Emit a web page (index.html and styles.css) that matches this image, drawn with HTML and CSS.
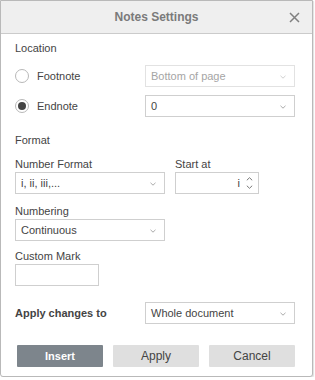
FILE: index.html
```html
<!DOCTYPE html>
<html lang="en">
<head>
  <meta charset="UTF-8">
  <title>Notes Settings</title>
  <link rel="stylesheet" href="styles.css">
</head>
<body>

<div class="dialog">
  <div class="dialog-header">
    <span class="dialog-title">Notes Settings</span>
    <svg class="close-icon" width="11" height="11" viewBox="0 0 11 11">
      <path d="M1 1 L10 10 M10 1 L1 10" stroke="#808080" stroke-width="1.5" fill="none"/>
    </svg>
  </div>

  <div class="dialog-body">
    <div class="section-title first">Location</div>

    <div class="loc-row">
      <label class="radio"><span class="radio-circle"></span>Footnote</label>
      <div class="select disabled">Bottom of page
        <svg class="chev" width="6" height="4" viewBox="0 0 6 4"><path d="M0.5 0.8 L3 3.2 L5.5 0.8" stroke="#d0d0d0" fill="none"/></svg>
      </div>
    </div>
    <div class="loc-row second">
      <label class="radio"><span class="radio-circle checked"></span>Endnote</label>
      <div class="select">0
        <svg class="chev" width="6" height="4" viewBox="0 0 6 4"><path d="M0.5 0.8 L3 3.2 L5.5 0.8" stroke="#aaa" fill="none"/></svg>
      </div>
    </div>

    <div class="section-title format">Format</div>

    <div class="format-row">
      <div class="field">
        <div class="field-label">Number Format</div>
        <div class="select">i, ii, iii,...
          <svg class="chev" width="6" height="4" viewBox="0 0 6 4"><path d="M0.5 0.8 L3 3.2 L5.5 0.8" stroke="#aaa" fill="none"/></svg>
        </div>
      </div>
      <div class="field">
        <div class="field-label">Start at</div>
        <div class="spinner">
          <span class="spin-value">i</span>
          <span class="spin-arrows">
            <svg width="7" height="4" viewBox="0 0 7 4"><path d="M0.8 3.3 L3.5 0.7 L6.2 3.3" stroke="#777" fill="none"/></svg>
            <svg width="7" height="4" viewBox="0 0 7 4"><path d="M0.8 0.7 L3.5 3.3 L6.2 0.7" stroke="#777" fill="none"/></svg>
          </span>
        </div>
      </div>
    </div>

    <div class="field numbering">
      <div class="field-label">Numbering</div>
      <div class="select">Continuous
        <svg class="chev" width="6" height="4" viewBox="0 0 6 4"><path d="M0.5 0.8 L3 3.2 L5.5 0.8" stroke="#aaa" fill="none"/></svg>
      </div>
    </div>

    <div class="field custom">
      <div class="field-label">Custom Mark</div>
      <div class="text-input"></div>
    </div>

    <div class="apply-row">
      <div class="apply-label">Apply changes to</div>
      <div class="select">Whole document
        <svg class="chev" width="6" height="4" viewBox="0 0 6 4"><path d="M0.5 0.8 L3 3.2 L5.5 0.8" stroke="#aaa" fill="none"/></svg>
      </div>
    </div>

    <div class="button-group">
      <button class="btn primary">Insert</button>
      <button class="btn">Apply</button>
      <button class="btn">Cancel</button>
    </div>
  </div>
</div>

</body>
</html>
```

FILE: styles.css
```css
body {
  margin: 0;
  font-family: "Liberation Sans", Arial, sans-serif;
  font-size: 11px;
  color: #444;
  background: #fff;
}

.dialog {
  width: 311px;
  height: 375px;
  border: 1px solid #b9b9b9;
  border-radius: 0 0 3px 3px;
  box-shadow: 1px 1px 1px rgba(0, 0, 0, 0.12);
  background: #fff;
}

.dialog-header {
  height: 32px;
  background: #efefef;
  border-bottom: 1px solid #cbcbcb;
  display: flex;
  align-items: center;
  justify-content: center;
  position: relative;
}

.dialog-title {
  font-size: 12px;
  font-weight: bold;
  color: #7a7a7a;
}

.close-icon {
  position: absolute;
  right: 12px;
  top: 11px;
}

.dialog-body {
  padding: 0 0 0 14px;
}

.section-title {
  line-height: 14px;
  height: 14px;
}

.section-title.first {
  padding-top: 7px;
}

.section-title.format {
  margin-top: 16px;
}

.loc-row {
  display: flex;
  align-items: center;
  margin-top: 10px;
}

.loc-row.second {
  margin-top: 8px;
}

.radio {
  width: 130px;
  display: flex;
  align-items: center;
  gap: 8px;
}

.radio-circle {
  width: 12px;
  height: 12px;
  border: 1px solid #b8b8b8;
  border-radius: 50%;
  box-sizing: content-box;
  position: relative;
}

.radio-circle.checked::after {
  content: "";
  position: absolute;
  left: 2px;
  top: 2px;
  width: 8px;
  height: 8px;
  border-radius: 50%;
  background: #444;
}

.select {
  width: 150px;
  height: 22px;
  box-sizing: border-box;
  border: 1px solid #cfcfcf;
  padding: 0 5px;
  line-height: 20px;
  position: relative;
  color: #444;
}

.select.disabled {
  color: #a5a5a5;
  border-color: #e2e2e2;
}

.chev {
  position: absolute;
  right: 8px;
  top: 9px;
}

.format-row {
  display: flex;
  gap: 10px;
  margin-top: 10px;
}

.field-label {
  line-height: 14px;
  height: 14px;
  margin-bottom: 1px;
}

.spinner {
  width: 84px;
  height: 22px;
  box-sizing: border-box;
  border: 1px solid #cfcfcf;
  display: flex;
  align-items: center;
  justify-content: flex-end;
  padding-right: 5px;
  gap: 6px;
}

.spin-arrows {
  display: flex;
  flex-direction: column;
  gap: 4px;
}

.spin-arrows svg {
  display: block;
}

.field.numbering {
  margin-top: 10px;
}

.field.custom {
  margin-top: 8px;
}

.text-input {
  width: 84px;
  height: 22px;
  box-sizing: border-box;
  border: 1px solid #cfcfcf;
}

.apply-row {
  display: flex;
  align-items: center;
  margin-top: 16px;
}

.apply-label {
  width: 130px;
  font-weight: bold;
}

.button-group {
  display: flex;
  gap: 10px;
  margin-top: 21px;
  padding-left: 2px;
}

.btn {
  width: 86px;
  height: 22px;
  border: none;
  border-radius: 1px;
  background: #dfdfdf;
  color: #444;
  font-family: "Liberation Sans", Arial, sans-serif;
  font-size: 12px;
  padding: 0;
}

.btn.primary {
  background: #7d858c;
  color: #fff;
  font-size: 11px;
  font-weight: bold;
}
```
